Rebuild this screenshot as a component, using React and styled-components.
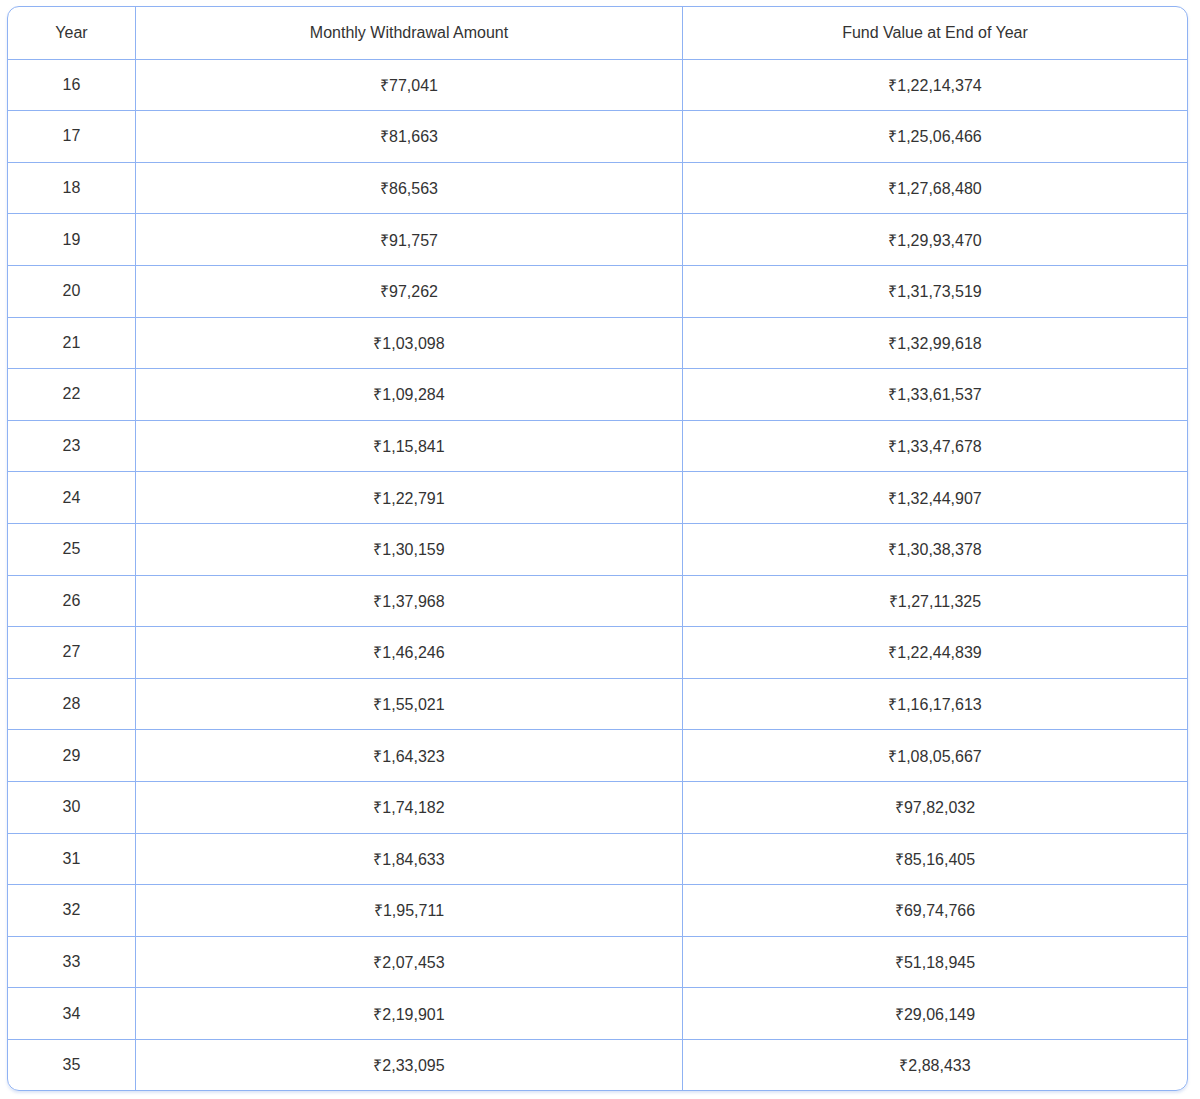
import React from "react";
import styled, { createGlobalStyle } from "styled-components";

const Global = createGlobalStyle`
  body { margin: 0; background: #fff; font-family: "Liberation Sans", Arial, sans-serif; }
`;

const Wrap = styled.div`
  padding: 6px 12px 8px 7px;
`;

const Table = styled.div`
  border: 1px solid #8fb2f3;
  border-radius: 12px;
  overflow: hidden;
  box-shadow: 0 2px 3px rgba(120, 150, 220, 0.25);
`;

const Row = styled.div`
  display: grid;
  grid-template-columns: 127px 547px 1fr;
  height: 51.6px;
  border-top: ${(p) => (p.$first ? "none" : "1px solid #8fb2f3")};
  box-sizing: border-box;
`;

const Cell = styled.div`
  display: flex;
  align-items: center;
  justify-content: center;
  font-size: 16px;
  color: #333;
  border-left: ${(p) => (p.$first ? "none" : "1px solid #8fb2f3")};
`;

const data = [
  [16, "77,041", "1,22,14,374"],
  [17, "81,663", "1,25,06,466"],
  [18, "86,563", "1,27,68,480"],
  [19, "91,757", "1,29,93,470"],
  [20, "97,262", "1,31,73,519"],
  [21, "1,03,098", "1,32,99,618"],
  [22, "1,09,284", "1,33,61,537"],
  [23, "1,15,841", "1,33,47,678"],
  [24, "1,22,791", "1,32,44,907"],
  [25, "1,30,159", "1,30,38,378"],
  [26, "1,37,968", "1,27,11,325"],
  [27, "1,46,246", "1,22,44,839"],
  [28, "1,55,021", "1,16,17,613"],
  [29, "1,64,323", "1,08,05,667"],
  [30, "1,74,182", "97,82,032"],
  [31, "1,84,633", "85,16,405"],
  [32, "1,95,711", "69,74,766"],
  [33, "2,07,453", "51,18,945"],
  [34, "2,19,901", "29,06,149"],
  [35, "2,33,095", "2,88,433"],
];

export default function App() {
  return (
    <Wrap>
      <Global />
      <Table>
        <Row $first>
          <Cell $first>Year</Cell>
          <Cell>Monthly Withdrawal Amount</Cell>
          <Cell>Fund Value at End of Year</Cell>
        </Row>
        {data.map(([y, m, f]) => (
          <Row key={y}>
            <Cell $first>{y}</Cell>
            <Cell>₹{m}</Cell>
            <Cell>₹{f}</Cell>
          </Row>
        ))}
      </Table>
    </Wrap>
  );
}
